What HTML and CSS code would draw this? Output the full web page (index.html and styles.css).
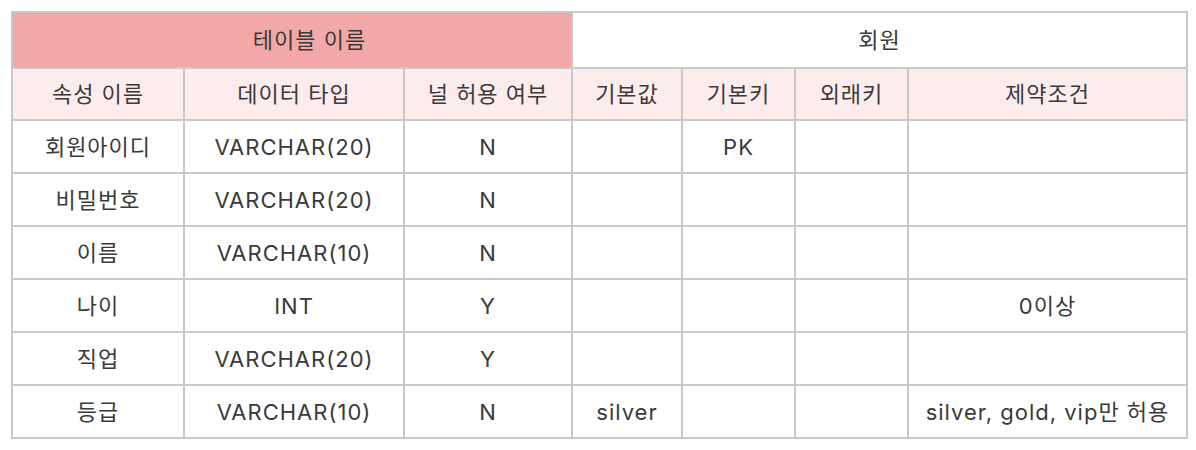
FILE: index.html
```html
<!DOCTYPE html>
<html lang="ko">
<head>
<meta charset="utf-8">
<title>회원 테이블</title>
<link rel="stylesheet" href="styles.css">
</head>
<body>
<div class="table">
  <div class="cell title span3">테이블 이름</div>
  <div class="cell span4">회원</div>

  <div class="cell head">속성 이름</div>
  <div class="cell head">데이터 타입</div>
  <div class="cell head">널 허용 여부</div>
  <div class="cell head">기본값</div>
  <div class="cell head">기본키</div>
  <div class="cell head">외래키</div>
  <div class="cell head">제약조건</div>

  <div class="cell">회원아이디</div><div class="cell">VARCHAR(20)</div><div class="cell">N</div><div class="cell"></div><div class="cell">PK</div><div class="cell"></div><div class="cell"></div>
  <div class="cell">비밀번호</div><div class="cell">VARCHAR(20)</div><div class="cell">N</div><div class="cell"></div><div class="cell"></div><div class="cell"></div><div class="cell"></div>
  <div class="cell">이름</div><div class="cell">VARCHAR(10)</div><div class="cell">N</div><div class="cell"></div><div class="cell"></div><div class="cell"></div><div class="cell"></div>
  <div class="cell">나이</div><div class="cell">INT</div><div class="cell">Y</div><div class="cell"></div><div class="cell"></div><div class="cell"></div><div class="cell">0이상</div>
  <div class="cell">직업</div><div class="cell">VARCHAR(20)</div><div class="cell">Y</div><div class="cell"></div><div class="cell"></div><div class="cell"></div><div class="cell"></div>
  <div class="cell">등급</div><div class="cell">VARCHAR(10)</div><div class="cell">N</div><div class="cell">silver</div><div class="cell"></div><div class="cell"></div><div class="cell">silver, gold, vip만 허용</div>
</div>
</body>
</html>
```

FILE: styles.css
```css
html, body {
  margin: 0;
  padding: 0;
  background: #ffffff;
}

body {
  padding: 11px 0 0 11px;
  font-family: Inter, "Noto Sans CJK KR", sans-serif;
  color: #3a3a3a;
}

.table {
  display: grid;
  grid-template-columns: 170px 218px 166px 108px 111px 111px 277px;
  grid-template-rows: 54px 50px repeat(6, 51px);
  gap: 2px;
  padding: 2px;
  background: #c9c9c9;
  width: max-content;
}

.cell {
  background: #ffffff;
  display: flex;
  align-items: center;
  justify-content: center;
  font-size: 22px;
  letter-spacing: 1px;
  line-height: 1;
  white-space: nowrap;
}

.span3 {
  grid-column: span 3;
}

.span4 {
  grid-column: span 4;
}

.title {
  background: #f3a8a8;
  padding-left: 35px;
}

.head {
  background: #fcecec;
}
```
